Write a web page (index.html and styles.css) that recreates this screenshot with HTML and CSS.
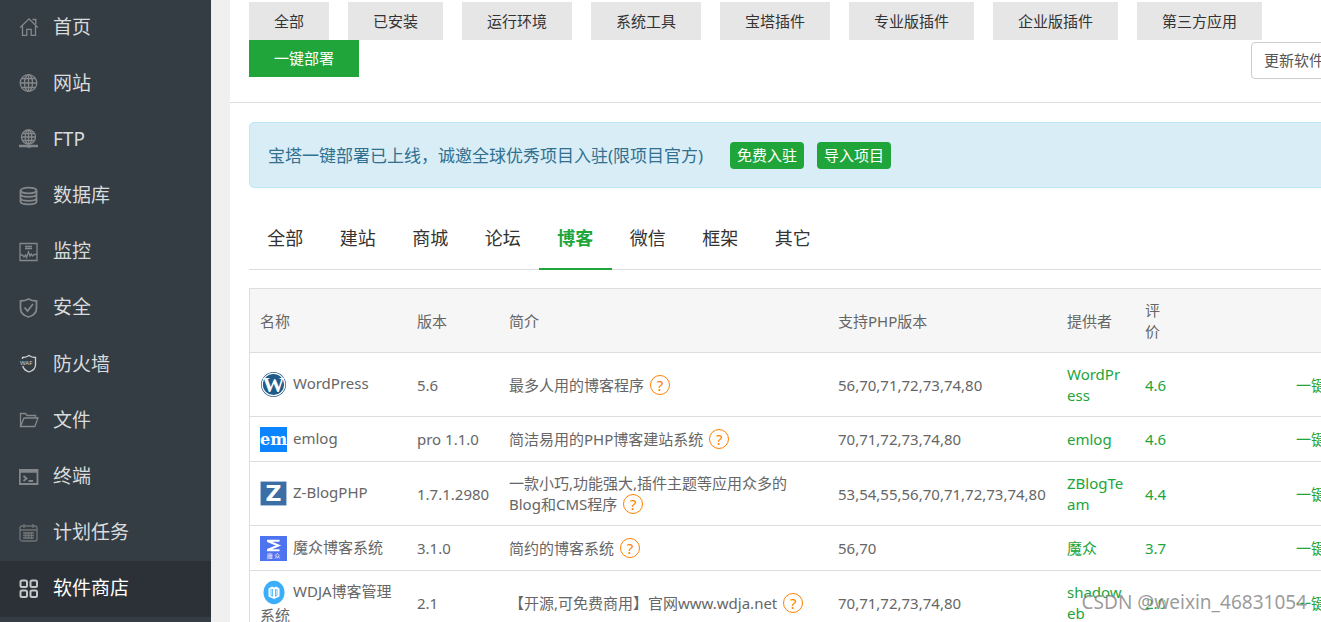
FILE: index.html
```html
<!DOCTYPE html>
<html lang="zh-CN">
<head>
<meta charset="utf-8">
<title>软件商店</title>
<link rel="stylesheet" href="styles.css">
</head>
<body>
<div class="app">
  <nav class="sidebar">
    <ul class="menu">
      <li><a class="menu-link" href="#"><svg class="menu-icon" viewBox="0 0 20 20"><path d="M1.2 10.5 10 1.8l8.8 8.7M13.500 2.500h3.300v4.800M3.500 9v9.300h4.300v-6h4.400v6h4.300V9"/></svg>首页</a></li>
      <li><a class="menu-link" href="#"><svg class="menu-icon" viewBox="0 0 20 20"><circle cx="9.500" cy="10" r="8.300"/><ellipse cx="9.500" cy="10" rx="4" ry="8.300"/><path d="M9.500 1.700v16.600M1.200 10h16.600M2.500 5.500h14M2.500 14.500h14"/></svg>网站</a></li>
      <li><a class="menu-link" href="#"><svg class="menu-icon" viewBox="0 0 20 20"><circle cx="9.500" cy="8" r="7"/><ellipse cx="9.500" cy="8" rx="3.300" ry="7"/><path d="M9.500 1v14M2.500 8h14M3.500 4.500h12M3.500 11.500h12"/><path class="thick" d="M0 17h19M8 17.500h4"/></svg>FTP</a></li>
      <li><a class="menu-link" href="#"><svg class="menu-icon bold" viewBox="0 0 20 20"><ellipse cx="9.500" cy="4.500" rx="8" ry="2.800"/><path d="M1.500 4.500v11c0 3.800 16 3.800 16 0v-11M1.500 8c0 3.800 16 3.800 16 0M1.500 12c0 3.800 16 3.800 16 0"/></svg>数据库</a></li>
      <li><a class="menu-link" href="#"><svg class="menu-icon" viewBox="0 0 20 20"><path d="M1 1.500h17v17H1zM6 4.500h7M6 6.500h7M1.500 13h2l1.500 2 1.500-2 1 2.500 2-5.500 1.500 4 1.200-2 1.300 2 1.500-1.500H18"/></svg>监控</a></li>
      <li><a class="menu-link" href="#"><svg class="menu-icon bold" viewBox="0 0 20 20"><path d="M1.500 3c3.500 0 5.500-.5 8-2 2.500 1.500 4.500 2 8 2v7c0 5-4 8-8 9-4-1-8-4-8-9zM5.500 9.500l3 3.500 5.500-7"/></svg>安全</a></li>
      <li><a class="menu-link" href="#"><svg class="menu-icon waf" viewBox="0 0 20 20"><path d="M3.500 5V3.500c2.500 0 4.500-.5 6.500-2 2 1.500 4 2 6.500 2V11c0 3.500-3.500 6-6.500 7-3-1-5.500-3-6.300-6"/><text x="1" y="10.500">WAF</text></svg>防火墙</a></li>
      <li><a class="menu-link" href="#"><svg class="menu-icon" viewBox="0 0 20 20"><path d="M3 16.500H1.500V3.500h5l1.500 2h8.500v2.500M1.500 16.500 5 8h14l-3.200 8.500z"/></svg>文件</a></li>
      <li><a class="menu-link" href="#"><svg class="menu-icon bold" viewBox="0 0 20 20"><path d="M.8 3h17.700v14H.8zM4.500 9l3 2.500-3 2.500M9.500 14h4.500"/><path class="thick" d="M1 4.500h17.500"/></svg>终端</a></li>
      <li><a class="menu-link" href="#"><svg class="menu-icon dim" viewBox="0 0 20 20"><rect x="1" y="3" width="17" height="15" rx="2"/><path d="M1 7h17M5 1v4M14 1v4M4 10h11M4 12.500h11M4 15h11M6.500 9v7M9.500 9v7M12.500 9v7"/></svg>计划任务</a></li>
      <li><a class="menu-link active" href="#"><svg class="menu-icon" viewBox="0 0 20 20"><rect x="1.500" y="1.500" width="6.500" height="6.500" rx="1.500"/><rect x="11.500" y="1.500" width="6.500" height="6.500" rx="1.500"/><rect x="1.500" y="11.500" width="6.500" height="6.500" rx="1.500"/><rect x="11.500" y="11.500" width="6.500" height="6.500" rx="1.500"/></svg>软件商店</a></li>
    </ul>
  </nav>

  <main class="main">
    <div class="filters">
      <button class="filter" type="button">全部</button>
      <button class="filter" type="button">已安装</button>
      <button class="filter" type="button">运行环境</button>
      <button class="filter" type="button">系统工具</button>
      <button class="filter" type="button">宝塔插件</button>
      <button class="filter" type="button">专业版插件</button>
      <button class="filter" type="button">企业版插件</button>
      <button class="filter" type="button">第三方应用</button>
      <button class="filter selected" type="button">一键部署</button>
      <button class="update" type="button">更新软件列表</button>
    </div>

    <div class="content">
      <div class="notice">
        <span class="notice-text">宝塔一键部署已上线，诚邀全球优秀项目入驻(限项目官方)</span>
        <button class="notice-button" type="button">免费入驻</button>
        <button class="notice-button" type="button">导入项目</button>
      </div>

      <div class="categories">
        <div class="category-list">
          <button class="category" type="button">全部</button>
          <button class="category" type="button">建站</button>
          <button class="category" type="button">商城</button>
          <button class="category" type="button">论坛</button>
          <button class="category current" type="button">博客</button>
          <button class="category" type="button">微信</button>
          <button class="category" type="button">框架</button>
          <button class="category" type="button">其它</button>
        </div>
      </div>

      <table class="apps">
        <colgroup>
          <col class="col-name"><col class="col-version"><col class="col-intro"><col class="col-php"><col class="col-author"><col class="col-score"><col>
        </colgroup>
        <thead>
          <tr><th>名称</th><th>版本</th><th>简介</th><th>支持PHP版本</th><th>提供者</th><th>评价</th><th class="action">操作</th></tr>
        </thead>
        <tbody>
          <tr>
            <td class="name"><svg class="logo" viewBox="0 0 27 25"><circle cx="13.500" cy="12.500" r="12.500" fill="#2a5f86"/><circle cx="13.500" cy="12.500" r="11.200" fill="#1f5c8a" stroke="#fff" stroke-width="1.200"/><text class="logo-w" x="13.500" y="20">W</text></svg>WordPress</td>
            <td>5.6</td>
            <td>最多人用的博客程序<a class="help" href="#">?</a></td>
            <td>56,70,71,72,73,74,80</td>
            <td class="author"><a href="#">WordPress</a></td>
            <td><a href="#">4.6</a></td>
            <td class="action"><a href="#">一键部署</a></td>
          </tr>
          <tr>
            <td class="name"><svg class="logo" viewBox="0 0 27 25"><path fill="#0a84ff" d="M0 0h27v25H0z"/><text class="logo-em" x="13.500" y="18">em</text></svg>emlog</td>
            <td>pro 1.1.0</td>
            <td>简洁易用的PHP博客建站系统<a class="help" href="#">?</a></td>
            <td>70,71,72,73,74,80</td>
            <td class="author"><a href="#">emlog</a></td>
            <td><a href="#">4.6</a></td>
            <td class="action"><a href="#">一键部署</a></td>
          </tr>
          <tr>
            <td class="name"><svg class="logo" viewBox="0 0 27 25"><rect x=".5" y=".5" width="26" height="24" rx="1" fill="#3a6ea5" stroke="#a9c0d8"/><text class="logo-z" x="13.500" y="20">Z</text></svg>Z-BlogPHP</td>
            <td>1.7.1.2980</td>
            <td>一款小巧,功能强大,插件主题等应用众多的Blog和CMS程序<a class="help" href="#">?</a></td>
            <td>53,54,55,56,70,71,72,73,74,80</td>
            <td class="author"><a href="#">ZBlogTeam</a></td>
            <td><a href="#">4.4</a></td>
            <td class="action"><a href="#">一键部署</a></td>
          </tr>
          <tr>
            <td class="name"><svg class="logo" viewBox="0 0 27 25"><path fill="#4e73f0" d="M0 0h27v25H0z"/><path fill="none" stroke="#fff" stroke-width="2" d="M7 4.800h12.500M7.500 5l11 4.500-11 4.500M7 14.200h12.500"/><text class="logo-mo" x="13.500" y="22">魔 众</text></svg>魔众博客系统</td>
            <td>3.1.0</td>
            <td>简约的博客系统<a class="help" href="#">?</a></td>
            <td>56,70</td>
            <td class="author"><a href="#">魔众</a></td>
            <td><a href="#">3.7</a></td>
            <td class="action"><a href="#">一键部署</a></td>
          </tr>
          <tr>
            <td class="name"><svg class="logo" viewBox="0 0 27 25"><ellipse cx="14" cy="12.500" rx="10.500" ry="11.800" fill="#3aaefb"/><path fill="#fff" d="M8.500 8.500 12 6.500l2 1 2-1 3.500 2v8L14 19l-5.500-2.500z"/><path fill="none" stroke="#3aaefb" stroke-width=".8" d="M11 9v6.500l1.500.8V9M15.500 9v7.300l1.500-.8V9"/></svg>WDJA博客管理系统</td>
            <td>2.1</td>
            <td>【开源,可免费商用】官网www.wdja.net<a class="help" href="#">?</a></td>
            <td>70,71,72,73,74,80</td>
            <td class="author"><a href="#">shadoweb</a></td>
            <td><a href="#">2.0</a></td>
            <td class="action"><a href="#">一键部署</a></td>
          </tr>
        </tbody>
      </table>
    </div>
  </main>
</div>
<div class="watermark">CSDN @weixin_46831054</div>
</body>
</html>
```
FILE: styles.css
```css
* {
  box-sizing: border-box;
}

body {
  margin: 0;
  height: 100vh;
  overflow: hidden;
  position: relative;
  background: #f0f0f1;
  color: #666;
  font: 15px/21px "Noto Sans", "Noto Sans CJK SC", sans-serif;
}

button {
  border: 0;
  font: inherit;
  cursor: pointer;
}

a {
  color: #20a53a;
  text-decoration: none;
}

.app {
  display: flex;
  gap: 19px;
  min-width: 1386px;
  min-height: 100vh;
}

/* Sidebar */
.sidebar {
  flex: 0 0 211px;
  background: #353d44;
}

.menu {
  display: grid;
  grid-auto-rows: 1fr;
  height: calc(100vh - 4px);
  margin: -1px 0 0;
  padding: 0;
  list-style: none;
}

.menu-link {
  display: flex;
  align-items: center;
  gap: 14px;
  height: 100%;
  padding-left: 19px;
  color: #d9dbdc;
  font-size: 19px;
}

.menu-link.active {
  background: #2c3138;
  color: #fff;
}

.menu-icon {
  width: 20px;
  height: 20px;
  fill: none;
  stroke: #85888a;
  stroke-width: 1.3;
}

.menu-icon.bold {
  stroke-width: 1.8;
}

.menu-icon.dim {
  stroke: #6f7375;
}

.menu-icon .thick {
  stroke-width: 2.5;
}

.menu-icon.waf {
  stroke: #d0d2d3;
}

.menu-icon text {
  fill: #d0d2d3;
  stroke: none;
  font-size: 6px;
}

.active .menu-icon {
  stroke: #c4c6c8;
  stroke-width: 2;
}

/* Main area */
.main {
  flex: 1;
  min-width: 0;
  background: #fff;
}

.filters {
  display: flex;
  flex-wrap: wrap;
  align-items: flex-start;
  column-gap: 19px;
  padding: 2px 19px 23px;
  border-bottom: 1px solid #ddd;
}

.filter {
  height: 38px;
  padding: 0 25px;
  background: #e6e6e6;
  color: #333;
}

.filter.selected {
  height: 37px;
  background: #20a53a;
  color: #fff;
}

.update {
  height: 37px;
  margin: 2px 0 0 auto;
  padding: 0 12px;
  border: 1px solid #ccc;
  border-radius: 4px;
  background: #fff;
  color: #555;
}

.content {
  padding: 19px;
}

.notice {
  display: flex;
  align-items: center;
  gap: 13px;
  height: 66px;
  padding: 0 18px;
  border: 1px solid #bce8f1;
  border-radius: 5px;
  background: #d9edf7;
}

.notice-text {
  min-width: 449px;
  color: #31708f;
  font-size: 17px;
}

.notice-button {
  height: 27px;
  padding: 0 7px;
  border-radius: 4px;
  background: #20a53a;
  color: #fff;
}

.categories {
  margin: 20px 0 18px;
  border-bottom: 1px solid #ddd;
}

.category-list {
  display: grid;
  grid-template-columns: repeat(8, 1fr);
  width: 580px;
  margin-bottom: -1px;
}

.category {
  height: 62px;
  padding: 0;
  border-bottom: 2px solid transparent;
  background: none;
  color: #333;
  font-size: 18px;
}

.category.current {
  border-color: #20a53a;
  color: #20a53a;
  font-weight: bold;
}

/* Application table */
.apps {
  width: 100%;
  table-layout: fixed;
  border: 1px solid #ddd;
  border-spacing: 0;
}

.col-name { width: 157px; }
.col-version { width: 92px; }
.col-intro { width: 329px; }
.col-php { width: 229px; }
.col-author { width: 78px; }
.col-score { width: 45px; }

.apps th,
.apps td {
  height: 45px;
  padding: 11px 10px 10px;
  border-bottom: 1px solid #ddd;
  text-align: left;
  vertical-align: middle;
}

.apps th {
  background: #f6f6f6;
  font-weight: normal;
}

.apps .name {
  padding-top: 8px;
  padding-bottom: 8px;
}

.apps .author {
  word-break: break-all;
}

.apps .action {
  text-align: right;
}

.logo {
  width: 27px;
  height: 25px;
  margin-right: 6px;
  vertical-align: middle;
}

.logo text {
  fill: #fff;
  text-anchor: middle;
}

.logo .logo-w {
  font: bold 22px "Liberation Serif", serif;
}

.logo .logo-em {
  font: bold 16px "DejaVu Serif", serif;
}

.logo .logo-z {
  font: bold 22px "DejaVu Sans", sans-serif;
}

.logo .logo-mo {
  font-size: 6px;
}

.help {
  display: inline-block;
  width: 20px;
  height: 20px;
  margin: -4px 0 -4px 6px;
  border: 1px solid #ff8000;
  border-radius: 50%;
  color: #ff8000;
  line-height: 18px;
  text-align: center;
}

.watermark {
  position: absolute;
  right: 14px;
  bottom: 6px;
  color: rgba(110, 110, 110, 0.7);
  font-size: 19px;
  line-height: 28px;
  text-shadow: 1px 1px 1px #fff;
}
```
